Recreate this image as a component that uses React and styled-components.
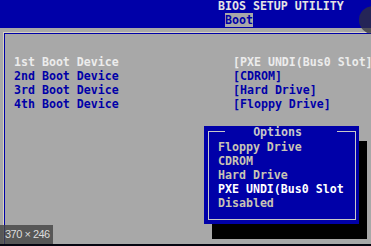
import React from "react";
import styled, { createGlobalStyle } from "styled-components";

const Global = createGlobalStyle`
  html, body { margin: 0; padding: 0; background: #a8a8a8; }
  #root { width: 371px; height: 246px; }
`;

const BLUE = "#0000a8";
const GRAY = "#a8a8a8";

const Screen = styled.div`
  position: relative;
  width: 371px;
  height: 246px;
  overflow: hidden;
  background: ${GRAY};
  display: flex;
  flex-direction: column;
  font-family: "DejaVu Sans Mono", "Liberation Mono", monospace;
  font-weight: bold;
  font-size: 11.6px;
`;

const TopBar = styled.div`
  height: 28px;
  flex: none;
  background: ${BLUE};
  padding-left: 218px;
  box-sizing: border-box;
  display: flex;
  flex-direction: column;
`;

const Title = styled.div`
  color: #e4e4e4;
  line-height: 13px;
  height: 13px;
  white-space: nowrap;
`;

const Tab = styled.div`
  align-self: flex-start;
  margin-left: 7px;
  background: ${GRAY};
  color: ${BLUE};
  line-height: 14px;
  height: 14px;
  padding: 0;
`;

const Frame = styled.div`
  flex: 1;
  margin: 4px 0 0 3px;
  border-top: 1px solid #d8d4c0;
  border-left: 1px solid #d8d4c0;
  box-shadow: inset 1px 1px 0 ${BLUE};
  padding: 22px 0 0 10px;
  box-sizing: border-box;
  display: grid;
  grid-template-columns: 219px auto;
  grid-auto-rows: 14px;
  align-content: start;
  white-space: nowrap;
`;

const Cell = styled.div`
  line-height: 14px;
  color: ${(p) => (p.$active ? "#ececec" : BLUE)};
`;

const BottomEdge = styled.div`
  height: 2px;
  flex: none;
  background: #050510;
`;

const Popup = styled.div`
  position: absolute;
  left: 204px;
  top: 126px;
  width: 155px;
  height: 98px;
  background: ${BLUE};
  box-shadow: 8px 15px 0 0 #000;
  padding: 5px 3px 4px 4px;
  box-sizing: border-box;
  display: flex;
`;

const PopupInner = styled.div`
  flex: 1;
  border: 1px solid #c8c8c8;
  border-top: none;
  display: flex;
  flex-direction: column;
`;

const PopupHead = styled.div`
  display: flex;
  align-items: center;
  height: 1px;
  margin-bottom: 8px;
`;

const HeadLine = styled.div`
  flex: ${(p) => p.$grow};
  height: 1px;
  background: #c8c8c8;
`;

const HeadTitle = styled.div`
  width: 112px;
  padding: 0 7px 0 0;
  box-sizing: border-box;
  text-align: center;
  color: #c8c8c8;
  line-height: 14px;
`;

const Item = styled.div`
  margin-left: 9px;
  line-height: 14px;
  height: 14px;
  white-space: nowrap;
  color: ${(p) => (p.$selected ? "#ffffff" : "#c8c4b4")};
`;

const SizeLabel = styled.div`
  position: absolute;
  left: 0;
  top: 225px;
  width: 53px;
  height: 19px;
  background: rgba(70, 70, 70, 0.82);
  color: #dcdcdc;
  font-family: "Liberation Sans", Arial, sans-serif;
  font-weight: normal;
  font-size: 11px;
  letter-spacing: -0.5px;
  line-height: 19px;
  padding-left: 5px;
  box-sizing: border-box;
  white-space: nowrap;
`;

const Blob = styled.div`
  position: absolute;
  left: 359px;
  top: 6px;
  width: 28px;
  height: 28px;
  border-radius: 50%;
  background: rgba(50, 50, 60, 0.75);
`;

const rows = [
  ["1st Boot Device", "[PXE UNDI(Bus0 Slot]"],
  ["2nd Boot Device", "[CDROM]"],
  ["3rd Boot Device", "[Hard Drive]"],
  ["4th Boot Device", "[Floppy Drive]"],
];

const options = ["Floppy Drive", "CDROM", "Hard Drive", "PXE UNDI(Bus0 Slot", "Disabled"];

export default function App() {
  return (
    <>
      <Global />
      <Screen>
        <TopBar>
          <Title>BIOS SETUP UTILITY</Title>
          <Tab>Boot</Tab>
        </TopBar>
        <Frame>
          {rows.map(([label, value], i) => (
            <React.Fragment key={label}>
              <Cell $active={i === 0}>{label}</Cell>
              <Cell $active={i === 0}>{value}</Cell>
            </React.Fragment>
          ))}
        </Frame>
        <BottomEdge />
        <Popup>
          <PopupInner>
            <PopupHead>
              <HeadLine $grow={17} />
              <HeadTitle>Options</HeadTitle>
              <HeadLine $grow={19} />
            </PopupHead>
            {options.map((o, i) => (
              <Item key={o} $selected={i === 3}>{o}</Item>
            ))}
          </PopupInner>
        </Popup>
        <SizeLabel>370 × 246</SizeLabel>
        <Blob />
      </Screen>
    </>
  );
}
